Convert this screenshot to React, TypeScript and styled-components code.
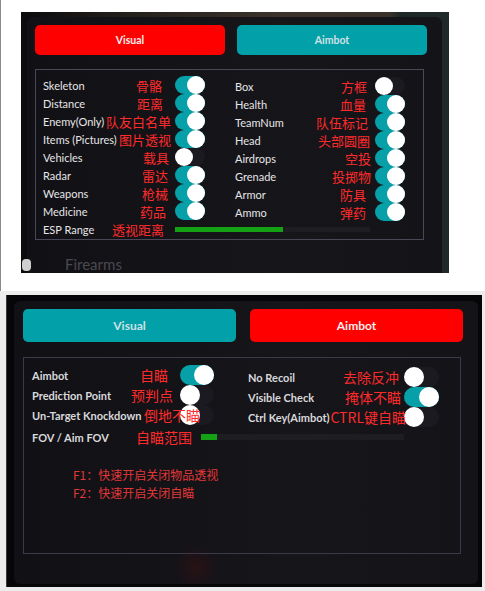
import styled, { createGlobalStyle } from 'styled-components';

// Global page reset
const GlobalStyle = createGlobalStyle`
  html, body {
    margin: 0;
    padding: 0;
    background: #ffffff;
  }
  body {
    font-family: Lato, "Noto Sans", sans-serif;
  }
`;

type Item = { en: string; cn: string; on: boolean; end: number };

const topLeft: Item[] = [
  { en: 'Skeleton', cn: '骨骼', on: true, end: 162 },
  { en: 'Distance', cn: '距离', on: true, end: 163 },
  { en: 'Enemy(Only)', cn: '队友白名单', on: true, end: 171 },
  { en: 'Items (Pictures)', cn: '图片透视', on: true, end: 171 },
  { en: 'Vehicles', cn: '载具', on: false, end: 169 },
  { en: 'Radar', cn: '雷达', on: true, end: 168 },
  { en: 'Weapons', cn: '枪械', on: true, end: 168 },
  { en: 'Medicine', cn: '药品', on: true, end: 166 },
];

const topRight: Item[] = [
  { en: 'Box', cn: '方框', on: false, end: 367 },
  { en: 'Health', cn: '血量', on: true, end: 366 },
  { en: 'TeamNum', cn: '队伍标记', on: true, end: 368 },
  { en: 'Head', cn: '头部圆圈', on: true, end: 370 },
  { en: 'Airdrops', cn: '空投', on: true, end: 371 },
  { en: 'Grenade', cn: '投掷物', on: true, end: 371 },
  { en: 'Armor', cn: '防具', on: true, end: 366 },
  { en: 'Ammo', cn: '弹药', on: true, end: 366 },
];

const botLeft: Item[] = [
  { en: 'Aimbot', cn: '自瞄', on: true, end: 167 },
  { en: 'Prediction Point', cn: '预判点', on: false, end: 172 },
  { en: 'Un-Target Knockdown', cn: '倒地不瞄', on: false, end: 199 },
];

const botRight: Item[] = [
  { en: 'No Recoil', cn: '去除反冲', on: false, end: 398 },
  { en: 'Visible Check', cn: '掩体不瞄', on: true, end: 400 },
  { en: 'Ctrl Key(Aimbot)', cn: 'CTRL键自瞄', on: false, end: 405 },
];

// Styling/CSS
const Page = styled.div`
  width: 485px;
  height: 591px;
  display: flex;
  flex-direction: column;
  overflow: hidden;
`;

const TopArea = styled.div`
  height: 291px;
  flex-shrink: 0;
  box-sizing: border-box;
  border-left: 1px solid #8a8a8a;
  padding: 12px 0 0 20px;
`;

const TopShot = styled.div`
  width: 428px;
  height: 261px;
  box-sizing: border-box;
  overflow: hidden;
  display: flex;
  padding: 5px 7px 0 6px;
  background: linear-gradient(
    90deg,
    #0c0c0d 0,
    #0c0c0d 6px,
    #24201c 25%,
    #3b332b 60%,
    #3a322a 86%,
    #1d2725 89%,
    #1f2a28 100%
  );
`;

const Panel = styled.div<{ $pad: string; $radius: string; $glow?: boolean }>`
  flex: 1;
  display: flex;
  flex-direction: column;
  padding: ${(p) => p.$pad};
  border-radius: ${(p) => p.$radius};
  background: ${(p) =>
      p.$glow
        ? 'radial-gradient(circle at 182px 266px, rgba(110, 12, 12, 0.22), transparent 22px),'
        : ''}
    linear-gradient(90deg, #111014 0%, #16151a 60%, #141317 100%);
`;

const Tabs = styled.div<{ $gap: number }>`
  display: flex;
  gap: ${(p) => p.$gap}px;
`;

const Tab = styled.div<{ $active: boolean; $w: number; $h: number; $fs: number }>`
  width: ${(p) => p.$w}px;
  height: ${(p) => p.$h}px;
  border-radius: 5px;
  display: flex;
  align-items: center;
  justify-content: center;
  font-size: ${(p) => p.$fs}px;
  font-weight: 700;
  background: ${(p) => (p.$active ? '#ff0000' : '#02a0a8')};
  color: ${(p) => (p.$active ? '#f4eeee' : '#cfe2e5')};
`;

const Box = styled.div<{ $w: number; $h: number; $top: number; $pad: string; $line: string }>`
  width: ${(p) => p.$w}px;
  height: ${(p) => p.$h}px;
  margin-top: ${(p) => p.$top}px;
  box-sizing: border-box;
  border: 1px solid ${(p) => p.$line};
  padding: ${(p) => p.$pad};
`;

const Columns = styled.div<{ $cols: string; $gap: number }>`
  display: grid;
  grid-template-columns: ${(p) => p.$cols};
  column-gap: ${(p) => p.$gap}px;
`;

const Column = styled.div<{ $down: number }>`
  display: flex;
  flex-direction: column;
  padding-top: ${(p) => p.$down}px;
`;

const Row = styled.div<{ $h: number; $sw: number; $gap: number }>`
  height: ${(p) => p.$h}px;
  display: grid;
  grid-template-columns: minmax(0, 1fr) auto ${(p) => p.$sw}px;
  column-gap: ${(p) => p.$gap}px;
  align-items: center;
`;

const Label = styled.span<{ $fs: number; $bold?: boolean; $w?: number }>`
  font-size: ${(p) => p.$fs}px;
  font-weight: ${(p) => (p.$bold ? 700 : 400)};
  color: ${(p) => (p.$bold ? '#d9d9dc' : '#e6e6e8')};
  white-space: nowrap;
  ${(p) => (p.$w ? `width: ${p.$w}px; flex-shrink: 0;` : '')}
`;

const Cn = styled.span<{ $shift?: number; $fs: number }>`
  position: relative;
  z-index: 1;
  font-family: "Noto Sans CJK SC", "Noto Sans", sans-serif;
  font-size: ${(p) => p.$fs}px;
  line-height: 1;
  color: #ff2b2b;
  white-space: nowrap;
  margin-right: ${(p) => p.$shift ?? 0}px;
`;

const Switch = styled.span<{ $on: boolean; $w: number; $k: number }>`
  position: relative;
  display: block;
  width: ${(p) => p.$w}px;
  height: ${(p) => p.$k}px;
  border-radius: ${(p) => p.$k / 2}px;
  background: ${(p) => (p.$on ? '#07a0a8' : '#1b1a21')};

  &::after {
    content: '';
    position: absolute;
    top: 0;
    ${(p) => (p.$on ? 'right: 0;' : 'left: 0;')}
    width: ${(p) => p.$k}px;
    height: ${(p) => p.$k}px;
    border-radius: 50%;
    background: #ffffff;
  }
`;

const RangeRow = styled.div<{ $h: number }>`
  height: ${(p) => p.$h}px;
  display: flex;
  align-items: center;
`;

const CnFixed = styled(Cn)<{ $w: number }>`
  width: ${(p) => p.$w}px;
  flex-shrink: 0;
`;

const Track = styled.div<{ $w: number; $left: number; $h: number }>`
  width: ${(p) => p.$w}px;
  height: ${(p) => p.$h}px;
  margin-left: ${(p) => p.$left}px;
  background: #1e1d22;
  display: flex;
`;

const Fill = styled.div<{ $w: number }>`
  width: ${(p) => p.$w}px;
  background: #14a214;
`;

const Firearms = styled.div`
  display: flex;
  align-items: flex-start;
  margin-top: 15px;
  margin-left: -13px;
  color: #4a4950;
  font-size: 15px;
`;

const Dot = styled.span`
  width: 9px;
  height: 12px;
  margin-top: 4px;
  border-radius: 4px;
  background: #cfcfcf;
`;

const FireText = styled.span`
  margin-left: 34px;
`;

const BottomArea = styled.div`
  flex: 1;
  background: #ececec;
  padding: 4px 3px 4px 6px;
`;

const BottomShot = styled.div`
  width: 476px;
  height: 292px;
  box-sizing: border-box;
  display: flex;
  padding: 6px 4px 3px 7px;
  background: #060608;
  border-left: 1px solid #3c3c3c;
`;

const Hotkeys = styled.div`
  margin-top: 19px;
  padding-left: 41px;
  display: flex;
  flex-direction: column;
  font-family: "Noto Sans CJK SC", "Noto Sans", sans-serif;
  font-size: 12px;
  line-height: 18px;
  color: #e03838;
`;
// End of Styling/CSS

function Toggles({
  items,
  base,
  h,
  sw,
  k,
  gap,
  fs,
  cfs,
  bold,
}: {
  items: Item[];
  base: number;
  h: number;
  sw: number;
  k: number;
  gap: number;
  fs: number;
  cfs: number;
  bold?: boolean;
}) {
  return (
    <>
      {items.map((item) => (
        <Row key={item.en} $h={h} $sw={sw} $gap={gap}>
          <Label $fs={fs} $bold={bold}>
            {item.en}
          </Label>
          <Cn $fs={cfs} $shift={base - item.end}>
            {item.cn}
          </Cn>
          <Switch $on={item.on} $w={sw} $k={k} />
        </Row>
      ))}
    </>
  );
}

function App() {
  return (
    <>
      <GlobalStyle />
      <Page>
        <TopArea>
          <TopShot>
            <Panel $pad="8px 0 0 8px" $radius="6px 6px 0 0">
              <Tabs $gap={12}>
                <Tab $active $w={190} $h={30} $fs={10.5}>
                  Visual
                </Tab>
                <Tab $active={false} $w={190} $h={30} $fs={10.5}>
                  Aimbot
                </Tab>
              </Tabs>

              <Box $w={389} $h={179} $top={14} $pad="6px 0 0 7px" $line="#4a4858">
                <Columns $cols="162px 170px" $gap={30}>
                  <Column $down={0}>
                    <Toggles items={topLeft} base={169} h={18} sw={30} k={18} gap={6} fs={11} cfs={13} />
                  </Column>
                  <Column $down={1}>
                    <Toggles items={topRight} base={367} h={18} sw={30} k={18} gap={8} fs={11} cfs={13} />
                  </Column>
                </Columns>
                <RangeRow $h={16}>
                  <Label $fs={11} $w={69}>
                    ESP Range
                  </Label>
                  <CnFixed $fs={13} $w={52}>
                    透视距离
                  </CnFixed>
                  <Track $w={195} $left={11} $h={5}>
                    <Fill $w={108} />
                  </Track>
                </RangeRow>
              </Box>

              <Firearms>
                <Dot />
                <FireText>Firearms</FireText>
              </Firearms>
            </Panel>
          </TopShot>
        </TopArea>

        <BottomArea>
          <BottomShot>
            <Panel $pad="8px 0 0 9px" $radius="6px" $glow>
              <Tabs $gap={14}>
                <Tab $active={false} $w={213} $h={33} $fs={12}>
                  Visual
                </Tab>
                <Tab $active $w={213} $h={33} $fs={12}>
                  Aimbot
                </Tab>
              </Tabs>

              <Box $w={438} $h={197} $top={15} $pad="7px 0 0 8px" $line="#3b3a4a">
                <Columns $cols="182px 191px" $gap={34}>
                  <Column $down={0}>
                    <Toggles items={botLeft} base={170} h={20} sw={34} k={20} gap={9} fs={11} cfs={14} bold />
                  </Column>
                  <Column $down={2}>
                    <Toggles items={botRight} base={400} h={20} sw={35} k={20} gap={3} fs={11} cfs={14} bold />
                  </Column>
                </Columns>
                <RangeRow $h={20}>
                  <Label $fs={11} $bold $w={104}>
                    FOV / Aim FOV
                  </Label>
                  <CnFixed $fs={14} $w={56}>
                    自瞄范围
                  </CnFixed>
                  <Track $w={203} $left={9} $h={6}>
                    <Fill $w={16} />
                  </Track>
                </RangeRow>
                <Hotkeys>
                  <span>F1：快速开启关闭物品透视</span>
                  <span>F2：快速开启关闭自瞄</span>
                </Hotkeys>
              </Box>
            </Panel>
          </BottomShot>
        </BottomArea>
      </Page>
    </>
  );
}

export default App;
